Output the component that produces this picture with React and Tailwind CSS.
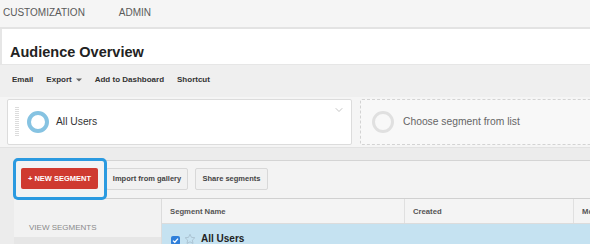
import { ChevronDown } from 'lucide-react';

function Ring({ color, width = 4 }) {
    return (
        <svg width="22" height="22" viewBox="0 0 22 22" className="shrink-0">
            <circle cx="11" cy="11" r={11 - width / 2} fill="none" stroke={color} strokeWidth={width} />
        </svg>
    );
}

function Handle() {
    return (
        <svg width="4" height="31" viewBox="0 0 4 31" className="shrink-0">
            {Array.from({ length: 15 }).map((_, i) => (
                <rect key={i} x="0" y={i * 2} width="4" height="1" fill="#dcdcdc" />
            ))}
        </svg>
    );
}

function Checkbox() {
    return (
        <span className="w-[9px] h-[9px] rounded-[2px] bg-[#2f7fda] flex items-center justify-center shrink-0">
            <svg width="7" height="7" viewBox="0 0 7 7">
                <path d="M1 3.6 L2.8 5.3 L6 1.6" fill="none" stroke="#fff" strokeWidth="1.3" />
            </svg>
        </span>
    );
}

function Star() {
    return (
        <svg width="12" height="12" viewBox="0 0 24 24" className="shrink-0">
            <path d="M12 2.5l2.9 6.2 6.8.8-5 4.7 1.3 6.7L12 17.6l-6 3.3 1.3-6.7-5-4.7 6.8-.8z" fill="none" stroke="#a6bccb" strokeWidth="1.6" strokeLinejoin="round" />
        </svg>
    );
}

export default function App() {
    return (
        <div className="relative w-[590px] h-[244px] overflow-hidden bg-[#ececec] font-['Liberation_Sans',Arial,sans-serif]">
            {/* Top nav */}
            <div className="h-[29px] bg-[#f5f5f5] border-b-2 border-[#e3e3e3]">
                <div className="h-[24px] flex items-center pl-[3px] gap-[34px] text-[10px] text-[#5a5a5a]">
                    <span>CUSTOMIZATION</span>
                    <span>ADMIN</span>
                </div>
            </div>

            {/* Title */}
            <div className="h-[35px] bg-white border-l-2 border-[#e6e6e6] pl-[8px] pt-[14px]">
                <h1 className="text-[14.5px] leading-[18px] font-bold text-[#222]">Audience Overview</h1>
            </div>

            {/* Toolbar */}
            <div className="h-[33px] bg-[#efefef] border-t border-[#e6e6e6] flex items-center pb-[2px] pl-[12px] gap-[13px] text-[8px] font-bold text-[#333]">
                <span>Email</span>
                <span className="flex items-center gap-[4px]">
                    Export
                    <svg width="6" height="4" viewBox="0 0 6 4"><path d="M0 0.5h6L3 3.5z" fill="#666" /></svg>
                </span>
                <span>Add to Dashboard</span>
                <span>Shortcut</span>
            </div>

            {/* Segment picker */}
            <div className="h-[51px] bg-[#f5f5f5] flex pt-[2px] pl-[7px] gap-[8px] border-b border-[#e2e2e2]">
                <div className="w-[345px] h-[46px] shrink-0 bg-white border border-[#dcdcdc] rounded-[2px] flex items-center pl-[7px] relative">
                    <Handle />
                    <span className="ml-[8px]"><Ring color="#86c3e2" width={4} /></span>
                    <span className="ml-[7px] text-[10.3px] text-[#333]">All Users</span>
                    <ChevronDown size={12} strokeWidth={1.5} className="absolute right-[6px] top-[4px] text-[#b0b0b0]" />
                </div>
                <div className="w-[240px] h-[46px] shrink-0 border border-dashed border-[#d3d3d3] rounded-[2px] flex items-center pl-[11px] bg-[#f8f8f8]">
                    <Ring color="#e0e0e0" width={3} />
                    <span className="ml-[9px] text-[10.3px] text-[#666]">Choose segment from list</span>
                </div>
            </div>

            {/* Segment panel */}
            <div className="mt-[12px] ml-[14px] bg-[#f3f3f3] border-t border-[#d4d4d4]">
                <div className="h-[38px] flex items-start pt-[7px] pl-[7px] border-b border-[#d0d0d0]">
                    <button className="w-[77px] h-[21px] bg-[#cf3a30] rounded-[2px] text-white text-[7.5px] font-bold">+ NEW SEGMENT</button>
                    <button className="ml-[8px] w-[82px] h-[22px] bg-[#f1f1f1] border border-[#d8d8d8] rounded-[2px] text-[#444] text-[7.5px] font-bold">Import from gallery</button>
                    <button className="ml-[7px] w-[73px] h-[22px] bg-[#f1f1f1] border border-[#d8d8d8] rounded-[2px] text-[#444] text-[7.5px] font-bold">Share segments</button>
                </div>
                <div className="flex">
                    <div className="w-[147px] shrink-0">
                        <div className="h-[38px] bg-[#f2f2f2] pl-[15px] pt-[24px] text-[8px] leading-[10px] text-[#8a8a8a]">VIEW SEGMENTS</div>
                        <div className="h-[20px] bg-[#e6e6e6]" />
                    </div>
                    <div className="flex-1 border-l border-[#dcdcdc]">
                        <div className="h-[25px] flex bg-[#f4f4f4] border-b border-[#dcdcdc] text-[7.7px] font-bold text-[#555]">
                            <div className="w-[242px] shrink-0 flex items-center pl-[8px] pt-[2px]">Segment Name</div>
                            <div className="w-[169px] shrink-0 flex items-center pl-[8px] pt-[2px] border-l border-[#e0e0e0]">Created</div>
                            <div className="flex-1 flex items-center pl-[8px] pt-[2px] border-l border-[#e0e0e0] whitespace-nowrap overflow-hidden">Mo</div>
                        </div>
                        <div className="h-[22px] bg-[#c5e2f1] flex items-end pb-[1px] pl-[9px] gap-[4px]">
                            <Checkbox />
                            <Star />
                            <span className="ml-[1px] text-[10px] leading-[12px] font-bold text-[#222]">All Users</span>
                        </div>
                    </div>
                </div>
            </div>

            {/* Highlight around new segment */}
            <div className="absolute left-[13px] top-[158px] w-[94px] h-[42px] border-[3px] border-[#2b9ae0] rounded-[5px]" />
        </div>
    );
}
